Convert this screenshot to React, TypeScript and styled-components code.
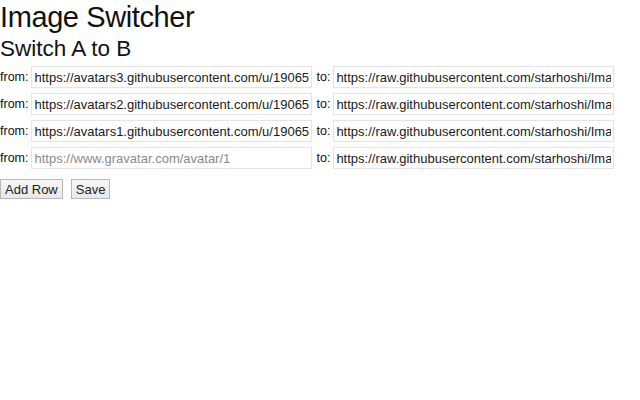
import React from "react";
import styled, { createGlobalStyle } from "styled-components";

const Global = createGlobalStyle`
  html, body { margin: 0; padding: 0; background: #fff; }
  body { font-family: "Liberation Sans", Arial, sans-serif; color: #111; }
`;

const Page = styled.div`
  display: flex;
  flex-direction: column;
`;

const Title = styled.h1`
  margin: 0;
  font-size: 29px;
  font-weight: 400;
  letter-spacing: -0.4px;
  line-height: 34px;
`;

const Subtitle = styled.h2`
  margin: 0;
  font-size: 22.5px;
  font-weight: 400;
  line-height: 30px;
`;

const Rows = styled.div`
  display: flex;
  flex-direction: column;
  gap: 5px;
  margin-top: 2px;
`;

const Row = styled.div`
  display: flex;
  align-items: center;
  height: 22px;
`;

const Label = styled.label`
  font-size: 12.5px;
  margin-right: 3px;
`;

const ToLabel = styled(Label)`
  margin-left: 4px;
`;

const Field = styled.input`
  box-sizing: border-box;
  width: 281px;
  height: 22px;
  padding: 0 2px;
  border: 1px solid #e4e4e4;
  font-family: "Liberation Sans", Arial, sans-serif;
  font-size: 13px;
  color: #1a1a1a;
  outline: none;
  &::placeholder { color: #8a8a8a; }
`;

const Actions = styled.div`
  display: flex;
  gap: 8px;
  margin-top: 10px;
`;

const Button = styled.button`
  height: 20px;
  padding: 0 4px;
  border: 1px solid #b8b8b8;
  background: linear-gradient(#f7f7f7, #e8e8e8);
  font-family: "Liberation Sans", Arial, sans-serif;
  font-size: 13px;
  color: #222;
  border-radius: 0;
`;

const rows = [
  { from: "https://avatars3.githubusercontent.com/u/19065", to: "https://raw.githubusercontent.com/starhoshi/ImageSwitcher" },
  { from: "https://avatars2.githubusercontent.com/u/19065", to: "https://raw.githubusercontent.com/starhoshi/ImageSwitcher" },
  { from: "https://avatars1.githubusercontent.com/u/19065", to: "https://raw.githubusercontent.com/starhoshi/ImageSwitcher" },
  { from: "", to: "https://raw.githubusercontent.com/starhoshi/ImageSwitcher" },
];

export default function App() {
  return (
    <Page>
      <Global />
      <Title>Image Switcher</Title>
      <Subtitle>Switch A to B</Subtitle>
      <Rows>
        {rows.map((r, i) => (
          <Row key={i}>
            <Label>from:</Label>
            <Field defaultValue={r.from} placeholder="https://www.gravatar.com/avatar/1" />
            <ToLabel>to:</ToLabel>
            <Field defaultValue={r.to} />
          </Row>
        ))}
      </Rows>
      <Actions>
        <Button>Add Row</Button>
        <Button>Save</Button>
      </Actions>
    </Page>
  );
}
